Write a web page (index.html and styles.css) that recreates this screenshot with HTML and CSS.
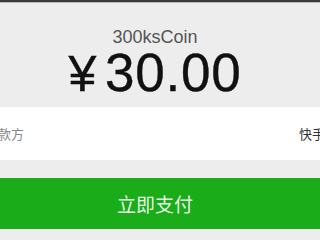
FILE: index.html
```html
<!DOCTYPE html>
<html lang="zh-CN">
<head>
<meta charset="utf-8">
<title>支付</title>
<link rel="stylesheet" href="styles.css">
</head>
<body>
<div class="topbar"></div>
<div class="page">
  <div class="header">
    <div class="product">300ksCoin</div>
    <div class="amount"><span class="yen">¥</span>30.00</div>
  </div>
  <div class="row">
    <span class="label">收款方</span>
    <span class="value">快手</span>
  </div>
  <div class="btn-wrap">
    <button class="pay">立即支付</button>
  </div>
</div>
</body>
</html>
```
FILE: styles.css
```css
html, body {
  margin: 0;
  padding: 0;
}
body {
  background: #ededed;
  overflow: hidden;
  width: 320px;
  height: 240px;
  font-family: "Liberation Sans", "Noto Sans CJK SC", sans-serif;
}
.topbar {
  height: 2px;
  background: #3a3a3a;
  border-bottom: 1px solid #b8b8b8;
}
.page {
  width: 360px;
  margin-left: -25px;
}
.header {
  padding-top: 24px;
  text-align: center;
}
.product {
  font-size: 18px;
  line-height: 20px;
  color: #555;
}
.amount {
  height: 51px;
  font-size: 53px;
  line-height: 51px;
  color: #111;
  letter-spacing: 0.8px;
  -webkit-text-stroke: 0.4px #111;
}
.yen {
  font-size: 50px;
  line-height: 40px;
  margin-right: 8px;
}
.row {
  margin-top: 9px;
  height: 53px;
  background: #fff;
  display: flex;
  align-items: center;
  justify-content: space-between;
  padding: 0 10px;
  font-family: "Noto Sans CJK SC", sans-serif;
  font-size: 13px;
}
.label {
  color: #888;
}
.value {
  color: #333;
}
.btn-wrap {
  margin-top: 18px;
}
.pay {
  display: block;
  width: 100%;
  height: 51px;
  border: none;
  margin: 0;
  background: #1aad19;
  color: rgba(255, 255, 255, 0.92);
  font-family: "Noto Sans CJK SC", sans-serif;
  font-size: 19px;
  padding: 0;
}
```
